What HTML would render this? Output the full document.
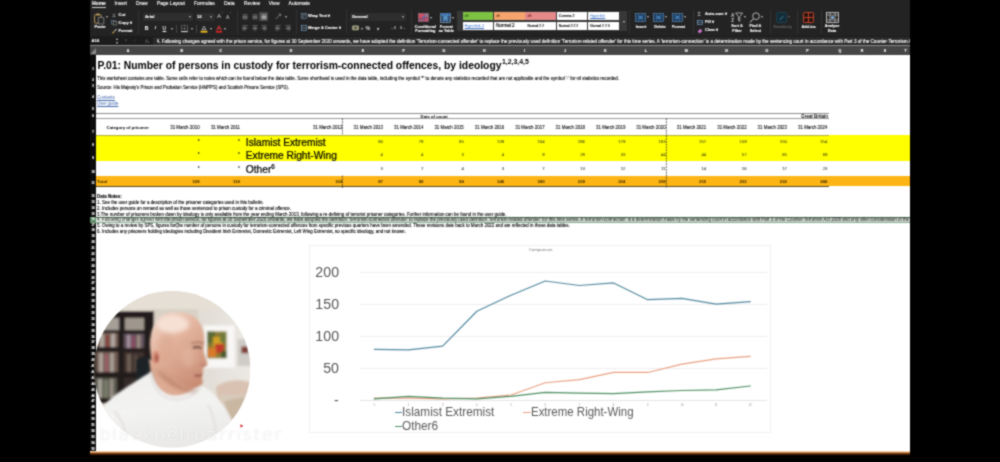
<!DOCTYPE html>
<html lang="en"><head><meta charset="utf-8"><title>P.01 Persons in custody for terrorism-connected offences</title>
<style>
html,body{margin:0;padding:0;background:#000;}
body{width:1000px;height:462px;position:relative;overflow:hidden;font-family:"Liberation Sans",sans-serif;}
.r{position:absolute;}
.t{position:absolute;white-space:nowrap;}
svg{position:absolute;overflow:visible;}
#stage{position:absolute;left:0;top:0;width:1000px;height:462px;overflow:hidden;background:#000;filter:url(#soft);will-change:transform;}
</style></head><body><svg width="0" height="0" style="position:absolute"><filter id="soft" x="0" y="0" width="100%" height="100%" color-interpolation-filters="sRGB"><feConvolveMatrix order="3" kernelMatrix="1 2 1 2 8 2 1 2 1" divisor="20" edgeMode="duplicate" preserveAlpha="true"/></filter></svg><div id="stage">
<div class="r" style="left:90px;top:0px;width:820px;height:36.5px;background:#232323;"></div>
<div class="r" style="left:90px;top:35.6px;width:820px;height:10px;background:#1c1c1c;"></div>
<div class="r" style="left:90px;top:45.3px;width:820px;height:1px;background:#8c8c8c;"></div>
<div class="r" style="left:90px;top:46.3px;width:820px;height:8.5px;background:#464646;"></div>
<span class="t " style="left:92px;top:0.4px;font-size:5px;line-height:6.0px;color:#fff;font-weight:bold;;-webkit-text-stroke:0.1px #fff">Home</span>
<span class="t " style="left:114.5px;top:0.4px;font-size:5px;line-height:6.0px;color:#fff;font-weight:normal;;-webkit-text-stroke:0.1px #fff">Insert</span>
<span class="t " style="left:136px;top:0.4px;font-size:5px;line-height:6.0px;color:#fff;font-weight:normal;;-webkit-text-stroke:0.1px #fff">Draw</span>
<span class="t " style="left:156.8px;top:0.4px;font-size:5px;line-height:6.0px;color:#fff;font-weight:normal;;-webkit-text-stroke:0.1px #fff">Page Layout</span>
<span class="t " style="left:194px;top:0.4px;font-size:5px;line-height:6.0px;color:#fff;font-weight:normal;;-webkit-text-stroke:0.1px #fff">Formulas</span>
<span class="t " style="left:224px;top:0.4px;font-size:5px;line-height:6.0px;color:#fff;font-weight:normal;;-webkit-text-stroke:0.1px #fff">Data</span>
<span class="t " style="left:243.8px;top:0.4px;font-size:5px;line-height:6.0px;color:#fff;font-weight:normal;;-webkit-text-stroke:0.1px #fff">Review</span>
<span class="t " style="left:268.8px;top:0.4px;font-size:5px;line-height:6.0px;color:#fff;font-weight:normal;;-webkit-text-stroke:0.1px #fff">View</span>
<span class="t " style="left:288.6px;top:0.4px;font-size:5px;line-height:6.0px;color:#fff;font-weight:normal;;-webkit-text-stroke:0.1px #fff">Automate</span>
<div class="r" style="left:92px;top:6.6px;width:13.6px;height:0.8px;background:#d0d0d0;"></div>
<svg style="left:94px;top:12.5px" width="11" height="12" viewBox="0 0 11 12"><rect x="0.6" y="1.6" width="6.4" height="8.6" rx="0.8" fill="none" stroke="#bd9c5c" stroke-width="0.95"/><rect x="2.2" y="0.4" width="3.2" height="2" rx="0.5" fill="#bd9c5c"/><rect x="4.4" y="4.4" width="5.4" height="6.6" rx="0.5" fill="#232323" stroke="#8f8f8f" stroke-width="0.8"/></svg>
<span class="t " style="left:106px;top:14.9px;font-size:3.5px;line-height:4.2px;color:#bbb;font-weight:normal;">▾</span>
<span class="t " style="left:94.6px;top:25.04px;font-size:4.1px;line-height:4.92px;color:#fff;font-weight:bold;;-webkit-text-stroke:0.1px #fff">Paste</span>
<svg style="left:112px;top:12.6px" width="4" height="4.6" viewBox="0 0 6 6"><path d="M1.2 0.3 L4 4.6 M4.8 0.3 L2 4.6" stroke="#a8a8a8" stroke-width="0.7" fill="none"/><circle cx="1.6" cy="5" r="0.8" fill="none" stroke="#a8a8a8" stroke-width="0.6"/><circle cx="4.4" cy="5" r="0.8" fill="none" stroke="#a8a8a8" stroke-width="0.6"/></svg>
<span class="t " style="left:118.6px;top:12.54px;font-size:4.1px;line-height:4.92px;color:#fff;font-weight:bold;;-webkit-text-stroke:0.1px #fff">Cut</span>
<svg style="left:111px;top:19.5px" width="7" height="6" viewBox="0 0 7 6"><rect x="0.4" y="0.4" width="3.6" height="3.6" fill="none" stroke="#6a8aa8" stroke-width="0.55"/><rect x="2.2" y="1.4" width="3.6" height="3.6" fill="#232323" stroke="#9a9a9a" stroke-width="0.55"/></svg>
<span class="t " style="left:118.6px;top:20.54px;font-size:4.1px;line-height:4.92px;color:#fff;font-weight:bold;;-webkit-text-stroke:0.1px #fff">Copy ▾</span>
<svg style="left:111px;top:27.5px" width="7" height="6" viewBox="0 0 7 6"><path d="M0.8 5 L2.8 3 L3.8 4 L1.8 5.4 Z" fill="#c9a04a"/><path d="M3.2 2.6 L5.2 0.8 L5.9 1.5 L4.1 3.5 Z" fill="#b0b0b0"/></svg>
<span class="t " style="left:118.6px;top:28.74px;font-size:4.1px;line-height:4.92px;color:#fff;font-weight:bold;;-webkit-text-stroke:0.1px #fff">Format</span>
<div class="r" style="left:137.5px;top:10px;width:0.5px;height:24px;background:#303030;"></div>
<div class="r" style="left:143px;top:12.6px;width:50px;height:8px;background:#2e2e2e;border-radius:1px"></div>
<span class="t " style="left:145px;top:14.08px;font-size:4.2px;line-height:5.04px;color:#fff;font-weight:bold;;-webkit-text-stroke:0.1px #fff">Arial</span>
<span class="t " style="left:188.5px;top:14.5px;font-size:3.5px;line-height:4.2px;color:#bbb;font-weight:normal;">▾</span>
<div class="r" style="left:195.5px;top:12.6px;width:19px;height:8px;background:#2e2e2e;border-radius:1px"></div>
<span class="t " style="left:197px;top:14.08px;font-size:4.2px;line-height:5.04px;color:#fff;font-weight:bold;;-webkit-text-stroke:0.1px #fff">12</span>
<span class="t " style="left:210px;top:14.5px;font-size:3.5px;line-height:4.2px;color:#bbb;font-weight:normal;">▾</span>
<span class="t " style="left:217px;top:12.48px;font-size:6.2px;line-height:7.44px;color:#d6d6d6;font-weight:normal;">A</span>
<span class="t " style="left:221.5px;top:11.6px;font-size:4px;line-height:4.8px;color:#d6d6d6;font-weight:normal;">ˆ</span>
<span class="t " style="left:226px;top:13.6px;font-size:5px;line-height:6.0px;color:#d6d6d6;font-weight:normal;">A</span>
<span class="t " style="left:230px;top:12.4px;font-size:3.5px;line-height:4.2px;color:#d6d6d6;font-weight:normal;">ˇ</span>
<span class="t " style="left:144.8px;top:25.4px;font-size:5px;line-height:6.0px;color:#fff;font-weight:bold;;-webkit-text-stroke:0.1px #fff">B</span>
<span class="t " style="left:154.6px;top:25.4px;font-size:5px;line-height:6.0px;color:#fff;font-weight:normal;font-style:italic;font-family:'Liberation Serif',serif;-webkit-text-stroke:0.1px #fff">I</span>
<span class="t " style="left:162.6px;top:25.4px;font-size:5px;line-height:6.0px;color:#fff;font-weight:normal;text-decoration:underline;-webkit-text-stroke:0.1px #fff">U</span>
<span class="t " style="left:170.5px;top:26.5px;font-size:3.5px;line-height:4.2px;color:#bbb;font-weight:normal;">▾</span>
<div class="r" style="left:176.2px;top:24.5px;width:0.5px;height:8px;background:#444;"></div>
<svg style="left:181px;top:25px" width="7" height="7" viewBox="0 0 7 7"><rect x="0.4" y="0.4" width="6.2" height="6.2" fill="none" stroke="#bdbdbd" stroke-width="0.5" stroke-dasharray="0.8 0.6"/><path d="M0.4 3.5 H6.6 M3.5 0.4 V6.6" stroke="#bdbdbd" stroke-width="0.5" stroke-dasharray="0.8 0.6"/><path d="M0.2 6.6 H6.8" stroke="#eee" stroke-width="0.9"/></svg>
<span class="t " style="left:190.5px;top:26.5px;font-size:3.5px;line-height:4.2px;color:#bbb;font-weight:normal;">▾</span>
<div class="r" style="left:196.2px;top:24.5px;width:0.5px;height:8px;background:#444;"></div>
<svg style="left:200px;top:24.5px" width="8" height="8" viewBox="0 0 8 8"><path d="M2 4.6 L4 1.2 L6 4.6 Z" fill="none" stroke="#d9d9d9" stroke-width="0.7"/><rect x="0.6" y="5.8" width="6.8" height="1.8" fill="#f4c41c"/></svg>
<span class="t " style="left:210px;top:26.5px;font-size:3.5px;line-height:4.2px;color:#bbb;font-weight:normal;">▾</span>
<svg style="left:214.5px;top:24.5px" width="8" height="8" viewBox="0 0 8 8"><path d="M1.6 5 L4 0.8 L6.4 5 M2.6 3.4 H5.4" fill="none" stroke="#e23b3b" stroke-width="0.9"/><rect x="0.8" y="5.8" width="6.4" height="1.8" fill="#e02424"/></svg>
<span class="t " style="left:224px;top:26.5px;font-size:3.5px;line-height:4.2px;color:#bbb;font-weight:normal;">▾</span>
<div class="r" style="left:236.5px;top:10px;width:0.5px;height:24px;background:#303030;"></div>
<div class="r" style="left:259.3px;top:12.4px;width:8.6px;height:8.4px;background:#4a4a4a;border-radius:1px"></div>
<svg style="left:242px;top:13.6px" width="6" height="6" viewBox="0 0 6 6"><rect x="0.5" y="0.6" width="5" height="0.6" fill="#a2a2a2"/><rect x="0.5" y="1.9500000000000002" width="5" height="0.6" fill="#a2a2a2"/><rect x="0.5" y="3.3000000000000003" width="5" height="0.6" fill="#a2a2a2"/><rect x="0.5" y="4.65" width="5" height="0.6" fill="#a2a2a2"/></svg>
<svg style="left:251.5px;top:13.6px" width="6" height="6" viewBox="0 0 6 6"><rect x="0.5" y="0.6" width="5" height="0.6" fill="#a2a2a2"/><rect x="0.5" y="1.9500000000000002" width="5" height="0.6" fill="#a2a2a2"/><rect x="0.5" y="3.3000000000000003" width="5" height="0.6" fill="#a2a2a2"/><rect x="0.5" y="4.65" width="5" height="0.6" fill="#a2a2a2"/></svg>
<svg style="left:260.6px;top:13.6px" width="6" height="6" viewBox="0 0 6 6"><rect x="0.5" y="0.6" width="5" height="0.6" fill="#eee"/><rect x="0.5" y="1.9500000000000002" width="5" height="0.6" fill="#eee"/><rect x="0.5" y="3.3000000000000003" width="5" height="0.6" fill="#eee"/><rect x="0.5" y="4.65" width="5" height="0.6" fill="#eee"/></svg>
<svg style="left:242px;top:25.4px" width="6" height="6" viewBox="0 0 6 6"><rect x="0.5" y="0.6" width="5" height="0.6" fill="#a2a2a2"/><rect x="0.5" y="1.9500000000000002" width="3.4" height="0.6" fill="#a2a2a2"/><rect x="0.5" y="3.3000000000000003" width="5" height="0.6" fill="#a2a2a2"/><rect x="0.5" y="4.65" width="3.4" height="0.6" fill="#a2a2a2"/></svg>
<svg style="left:251.5px;top:25.4px" width="6" height="6" viewBox="0 0 6 6"><rect x="0.5" y="0.6" width="5" height="0.6" fill="#a2a2a2"/><rect x="1.5" y="1.9500000000000002" width="3" height="0.6" fill="#a2a2a2"/><rect x="0.5" y="3.3000000000000003" width="5" height="0.6" fill="#a2a2a2"/><rect x="1.5" y="4.65" width="3" height="0.6" fill="#a2a2a2"/></svg>
<svg style="left:260.6px;top:25.4px" width="6" height="6" viewBox="0 0 6 6"><rect x="0.5" y="0.6" width="5" height="0.6" fill="#a2a2a2"/><rect x="2.1" y="1.9500000000000002" width="3.4" height="0.6" fill="#a2a2a2"/><rect x="0.5" y="3.3000000000000003" width="5" height="0.6" fill="#a2a2a2"/><rect x="2.1" y="4.65" width="3.4" height="0.6" fill="#a2a2a2"/></svg>
<svg style="left:275px;top:13px" width="8" height="7" viewBox="0 0 8 7"><path d="M0.8 6 L5.4 1.4 M3.6 1.2 H5.6 V3.2" fill="none" stroke="#a2a2a2" stroke-width="0.7"/></svg>
<span class="t " style="left:284.5px;top:14.7px;font-size:3.5px;line-height:4.2px;color:#bbb;font-weight:normal;">▾</span>
<svg style="left:275px;top:25.4px" width="6" height="6" viewBox="0 0 6 6"><rect x="0.5" y="0.6" width="5" height="0.6" fill="#a2a2a2"/><rect x="0.5" y="1.9500000000000002" width="3.4" height="0.6" fill="#a2a2a2"/><rect x="0.5" y="3.3000000000000003" width="5" height="0.6" fill="#a2a2a2"/><rect x="0.5" y="4.65" width="3.4" height="0.6" fill="#a2a2a2"/></svg>
<svg style="left:284.5px;top:25.4px" width="6" height="6" viewBox="0 0 6 6"><rect x="0.5" y="0.6" width="5" height="0.6" fill="#a2a2a2"/><rect x="2.1" y="1.9500000000000002" width="3.4" height="0.6" fill="#a2a2a2"/><rect x="0.5" y="3.3000000000000003" width="5" height="0.6" fill="#a2a2a2"/><rect x="2.1" y="4.65" width="3.4" height="0.6" fill="#a2a2a2"/></svg>
<div class="r" style="left:295.5px;top:10px;width:0.5px;height:24px;background:#303030;"></div>
<svg style="left:301px;top:13.4px" width="6" height="6" viewBox="0 0 6 6"><rect x="0.4" y="0.4" width="5.2" height="5.2" fill="none" stroke="#6a9ac6" stroke-width="0.6"/><path d="M1.4 2 H4.6 M1.4 3.8 H3.4" stroke="#cfcfcf" stroke-width="0.5"/></svg>
<span class="t " style="left:308px;top:14.0px;font-size:4.0px;line-height:4.8px;color:#fff;font-weight:bold;;-webkit-text-stroke:0.1px #fff">Wrap Text ▾</span>
<svg style="left:301px;top:25.4px" width="6" height="6" viewBox="0 0 6 6"><rect x="0.4" y="0.4" width="5.2" height="5.2" fill="none" stroke="#7fb2e0" stroke-width="0.6"/><path d="M1.2 3 H4.8" stroke="#cfcfcf" stroke-width="0.6"/></svg>
<span class="t " style="left:308px;top:26.0px;font-size:4.0px;line-height:4.8px;color:#fff;font-weight:bold;;-webkit-text-stroke:0.1px #fff">Merge &amp; Centre ▾</span>
<div class="r" style="left:345.5px;top:10px;width:0.5px;height:24px;background:#303030;"></div>
<div class="r" style="left:350px;top:12.6px;width:56px;height:8px;background:#2e2e2e;border-radius:1px"></div>
<span class="t " style="left:352px;top:14.08px;font-size:4.2px;line-height:5.04px;color:#fff;font-weight:bold;;-webkit-text-stroke:0.1px #fff">General</span>
<span class="t " style="left:401.5px;top:14.5px;font-size:3.5px;line-height:4.2px;color:#bbb;font-weight:normal;">▾</span>
<svg style="left:352px;top:25.4px" width="7" height="6" viewBox="0 0 7 6"><rect x="0.4" y="0.8" width="6.2" height="4.2" rx="0.6" fill="#9a9a7a" stroke="#c9c9a9" stroke-width="0.4"/><circle cx="3.5" cy="2.9" r="1.1" fill="#3a3a2a"/></svg>
<span class="t " style="left:360.5px;top:26.5px;font-size:3.5px;line-height:4.2px;color:#bbb;font-weight:normal;">▾</span>
<span class="t " style="left:365.5px;top:25.16px;font-size:5.4px;line-height:6.48px;color:#d6d6d6;font-weight:bold;">%</span>
<span class="t " style="left:376.5px;top:24.24px;font-size:5.6px;line-height:6.72px;color:#d6d6d6;font-weight:bold;">❟</span>
<span class="t " style="left:390.5px;top:26.36px;font-size:3.4px;line-height:4.08px;color:#c9c9c9;font-weight:bold;">←0</span>
<span class="t " style="left:400px;top:26.36px;font-size:3.4px;line-height:4.08px;color:#c9c9c9;font-weight:bold;">0→</span>
<div class="r" style="left:410.5px;top:10px;width:0.5px;height:24px;background:#303030;"></div>
<svg style="left:417.8px;top:12.8px" width="11" height="9" viewBox="0 0 11 9"><rect x="0.4" y="0.4" width="10.2" height="8.2" fill="#7a3850" stroke="#b08a9a" stroke-width="0.5"/><rect x="0.8" y="0.8" width="5.4" height="4.4" fill="#cf4f66"/><rect x="6.4" y="4.6" width="3.8" height="3.6" fill="#b8506a"/><rect x="6.4" y="0.8" width="3.8" height="3.4" fill="#8f7a90"/><rect x="0.8" y="5.6" width="5.2" height="2.6" fill="#9a5a74"/><circle cx="5.6" cy="4.4" r="1.1" fill="#3f6fc0"/></svg>
<span class="t " style="left:430px;top:15.5px;font-size:3.5px;line-height:4.2px;color:#bbb;font-weight:normal;">▾</span>
<span class="t" style="left:375.4px;width:100px;text-align:center;top:24.79px;font-size:3.85px;line-height:4.62px;color:#fff;font-weight:bold;;-webkit-text-stroke:0.1px #fff">Conditional</span>
<span class="t" style="left:375.4px;width:100px;text-align:center;top:28.99px;font-size:3.85px;line-height:4.62px;color:#fff;font-weight:bold;;-webkit-text-stroke:0.1px #fff">Formatting</span>
<svg style="left:439.6px;top:12.6px" width="11" height="10" viewBox="0 0 11 10"><rect x="0.4" y="0.4" width="10.2" height="9.2" fill="#1c3a5c" stroke="#9ab4cc" stroke-width="0.6"/><rect x="3.8" y="2.8" width="3.4" height="4.4" fill="#3f86c8"/><rect x="0.4" y="0.4" width="10.2" height="2.4" fill="#2f6aa8"/><path d="M0.4 2.8 H10.6 M0.4 5 H10.6 M0.4 7.2 H10.6 M3.8 0.4 V9.6 M7.2 0.4 V9.6" stroke="#8fb0d0" stroke-width="0.45"/></svg>
<span class="t " style="left:452px;top:15.5px;font-size:3.5px;line-height:4.2px;color:#bbb;font-weight:normal;">▾</span>
<span class="t" style="left:396.3px;width:100px;text-align:center;top:24.79px;font-size:3.85px;line-height:4.62px;color:#fff;font-weight:bold;;-webkit-text-stroke:0.1px #fff">Format</span>
<span class="t" style="left:396.3px;width:100px;text-align:center;top:28.99px;font-size:3.85px;line-height:4.62px;color:#fff;font-weight:bold;;-webkit-text-stroke:0.1px #fff">as Table</span>
<div class="r" style="left:457px;top:11.2px;width:169.6px;height:20.2px;background:#383838;border-radius:1px"></div>
<div class="r" style="left:462.6px;top:12.4px;width:30.6px;height:7.8px;background:#7dc242;"></div>
<span class="t " style="left:464.6px;top:14.24px;font-size:3.6px;line-height:4.32px;color:#1f3d0c;font-weight:normal;">dft</span>
<div class="r" style="left:494px;top:12.4px;width:30.6px;height:7.8px;background:#f4a46c;"></div>
<span class="t " style="left:496px;top:14.24px;font-size:3.6px;line-height:4.32px;color:#5a2a08;font-weight:normal;">dft</span>
<div class="r" style="left:525.4px;top:12.4px;width:30.6px;height:7.8px;background:#e48a8a;"></div>
<span class="t " style="left:527.4px;top:14.24px;font-size:3.6px;line-height:4.32px;color:#5a0808;font-weight:normal;">dft</span>
<div class="r" style="left:556.8px;top:12.4px;width:30.6px;height:7.8px;background:#fff;"></div>
<span class="t " style="left:558.8px;top:14.24px;font-size:3.6px;line-height:4.32px;color:#000;font-weight:normal;;-webkit-text-stroke:0.12px #000">Comma 2</span>
<div class="r" style="left:588.2px;top:12.4px;width:30.6px;height:7.8px;background:#fff;"></div>
<span class="t " style="left:590.2px;top:14.24px;font-size:3.6px;line-height:4.32px;color:#3a6fc4;font-weight:normal;text-decoration:underline;text-decoration-thickness:0.35px">Hyperlink</span>
<div class="r" style="left:462.6px;top:22.4px;width:30.6px;height:7.4px;background:#fff;"></div>
<span class="t " style="left:464.6px;top:23.86px;font-size:3.9px;line-height:4.68px;color:#3a6fc4;font-weight:normal;text-decoration:underline;text-decoration-thickness:0.35px">Hyperlink 2</span>
<div class="r" style="left:494px;top:22.4px;width:30.6px;height:7.4px;background:#fff;"></div>
<span class="t " style="left:496px;top:23.44px;font-size:4.6px;line-height:5.52px;color:#000;font-weight:normal;;-webkit-text-stroke:0.12px #000">Normal 2</span>
<div class="r" style="left:525.4px;top:22.4px;width:30.6px;height:7.4px;background:#fff;"></div>
<span class="t " style="left:527.4px;top:24.16px;font-size:3.4px;line-height:4.08px;color:#000;font-weight:normal;;-webkit-text-stroke:0.12px #000">Normal 2 2</span>
<div class="r" style="left:556.8px;top:22.4px;width:30.6px;height:7.4px;background:#fff;"></div>
<span class="t " style="left:558.8px;top:24.16px;font-size:3.4px;line-height:4.08px;color:#000;font-weight:normal;;-webkit-text-stroke:0.12px #000">Normal 2 2 2</span>
<div class="r" style="left:588.2px;top:22.4px;width:30.6px;height:7.4px;background:#fff;"></div>
<span class="t " style="left:590.2px;top:24.16px;font-size:3.4px;line-height:4.08px;color:#000;font-weight:normal;;-webkit-text-stroke:0.12px #000">Normal 2 2 3</span>
<span class="t " style="left:622.6px;top:19.5px;font-size:3.5px;line-height:4.2px;color:#bbb;font-weight:normal;">▾</span>
<div class="r" style="left:628.5px;top:10px;width:0.5px;height:24px;background:#303030;"></div>
<svg style="left:635px;top:12.6px" width="11" height="9" viewBox="0 0 11 9"><rect x="0.4" y="0.4" width="10.2" height="8.2" fill="#1a3048" stroke="#5f98cf" stroke-width="0.6"/><path d="M0.4 3 H10.6 M0.4 5.8 H10.6 M3.8 0.4 V8.6 M7.2 0.4 V8.6" stroke="#4f86bd" stroke-width="0.5"/><rect x="3.8" y="3" width="3.4" height="2.8" fill="#3f78b4"/></svg>
<span class="t " style="left:647px;top:14.9px;font-size:3.5px;line-height:4.2px;color:#bbb;font-weight:normal;">▾</span>
<svg style="left:653.4px;top:12.6px" width="11" height="9" viewBox="0 0 11 9"><rect x="0.4" y="0.4" width="10.2" height="8.2" fill="#1a3048" stroke="#5f98cf" stroke-width="0.6"/><path d="M0.4 3 H10.6 M0.4 5.8 H10.6 M3.8 0.4 V8.6 M7.2 0.4 V8.6" stroke="#4f86bd" stroke-width="0.5"/><rect x="3.8" y="3" width="3.4" height="2.8" fill="#3f78b4"/></svg>
<span class="t " style="left:665.4px;top:14.9px;font-size:3.5px;line-height:4.2px;color:#bbb;font-weight:normal;">▾</span>
<svg style="left:671.6px;top:12.6px" width="11" height="9" viewBox="0 0 11 9"><rect x="0.4" y="0.4" width="10.2" height="8.2" fill="#1a3048" stroke="#5f98cf" stroke-width="0.6"/><path d="M0.4 3 H10.6 M0.4 5.8 H10.6 M3.8 0.4 V8.6 M7.2 0.4 V8.6" stroke="#4f86bd" stroke-width="0.5"/><rect x="3.8" y="3" width="3.4" height="2.8" fill="#3f78b4"/></svg>
<span class="t " style="left:683.6px;top:14.9px;font-size:3.5px;line-height:4.2px;color:#bbb;font-weight:normal;">▾</span>
<span class="t" style="left:591px;width:100px;text-align:center;top:24.69px;font-size:3.85px;line-height:4.62px;color:#fff;font-weight:bold;;-webkit-text-stroke:0.1px #fff">Insert</span>
<span class="t" style="left:610px;width:100px;text-align:center;top:24.69px;font-size:3.85px;line-height:4.62px;color:#fff;font-weight:bold;;-webkit-text-stroke:0.1px #fff">Delete</span>
<span class="t" style="left:628.5px;width:100px;text-align:center;top:24.69px;font-size:3.85px;line-height:4.62px;color:#fff;font-weight:bold;;-webkit-text-stroke:0.1px #fff">Format</span>
<div class="r" style="left:692.5px;top:10px;width:0.5px;height:24px;background:#303030;"></div>
<span class="t " style="left:697.5px;top:11.04px;font-size:5.6px;line-height:6.72px;color:#d6d6d6;font-weight:normal;">Σ</span>
<span class="t " style="left:705px;top:12.0px;font-size:4.0px;line-height:4.8px;color:#fff;font-weight:bold;;-webkit-text-stroke:0.1px #fff">Auto-sum ▾</span>
<svg style="left:697px;top:19.8px" width="6" height="5" viewBox="0 0 6 5"><rect x="0.4" y="0.4" width="5.2" height="4.2" fill="none" stroke="#7fb2e0" stroke-width="0.6"/><path d="M0.4 2.5 H5.6" stroke="#7fb2e0" stroke-width="0.5"/></svg>
<span class="t " style="left:705px;top:20.0px;font-size:4.0px;line-height:4.8px;color:#fff;font-weight:bold;;-webkit-text-stroke:0.1px #fff">Fill ▾</span>
<svg style="left:697px;top:27.6px" width="6" height="6" viewBox="0 0 6 6"><path d="M0.6 3.8 L3.2 0.8 L5.4 2.8 L2.8 5.6 Z" fill="#c774c7"/></svg>
<span class="t " style="left:705px;top:28.0px;font-size:4.0px;line-height:4.8px;color:#fff;font-weight:bold;;-webkit-text-stroke:0.1px #fff">Clear ▾</span>
<svg style="left:730.5px;top:12.4px" width="13" height="11" viewBox="0 0 13 11"><text x="0" y="4.6" font-size="4.6" font-family="Liberation Sans" font-weight="bold" fill="#d6d6d6">A</text><text x="0.2" y="9.8" font-size="4.6" font-family="Liberation Sans" font-weight="bold" fill="#d6d6d6">Z</text><path d="M4.6 1 H11.6 L8.8 4.6 V9.4 L7.4 8.4 V4.6 Z" fill="none" stroke="#d6d6d6" stroke-width="0.7"/></svg>
<span class="t " style="left:743.6px;top:15.3px;font-size:3.5px;line-height:4.2px;color:#bbb;font-weight:normal;">▾</span>
<span class="t" style="left:687px;width:100px;text-align:center;top:24.29px;font-size:3.85px;line-height:4.62px;color:#fff;font-weight:bold;;-webkit-text-stroke:0.1px #fff">Sort &amp;</span>
<span class="t" style="left:687px;width:100px;text-align:center;top:28.69px;font-size:3.85px;line-height:4.62px;color:#fff;font-weight:bold;;-webkit-text-stroke:0.1px #fff">Filter</span>
<svg style="left:748.5px;top:12.4px" width="12" height="11" viewBox="0 0 12 11"><circle cx="7" cy="4.2" r="3.4" fill="none" stroke="#d6d6d6" stroke-width="0.8"/><path d="M4.6 6.8 L0.8 10.4" stroke="#d6d6d6" stroke-width="1"/></svg>
<span class="t " style="left:761.2px;top:15.3px;font-size:3.5px;line-height:4.2px;color:#bbb;font-weight:normal;">▾</span>
<span class="t" style="left:705.4px;width:100px;text-align:center;top:24.29px;font-size:3.85px;line-height:4.62px;color:#fff;font-weight:bold;;-webkit-text-stroke:0.1px #fff">Find &amp;</span>
<span class="t" style="left:705.4px;width:100px;text-align:center;top:28.69px;font-size:3.85px;line-height:4.62px;color:#fff;font-weight:bold;;-webkit-text-stroke:0.1px #fff">Select</span>
<div class="r" style="left:769.5px;top:10px;width:0.5px;height:24px;background:#303030;"></div>
<svg style="left:776px;top:12.4px" width="11" height="11" viewBox="0 0 11 11"><rect x="0.6" y="0.6" width="9.8" height="9.8" rx="1" fill="#142a34" stroke="#20495c" stroke-width="0.8"/><path d="M3 7.6 L6.8 3.2 L8 4.4 L4.4 8.4 Z" fill="#24566c"/></svg>
<span class="t " style="left:788.4px;top:15.3px;font-size:3.5px;line-height:4.2px;color:#666;font-weight:normal;">▾</span>
<span class="t" style="left:732.5px;width:100px;text-align:center;top:24.78px;font-size:3.7px;line-height:4.44px;color:#6a6a6a;font-weight:bold;">Sensitivity</span>
<div class="r" style="left:796.5px;top:10px;width:0.5px;height:24px;background:#303030;"></div>
<svg style="left:803px;top:12.4px" width="11" height="11" viewBox="0 0 11 11"><rect x="0.5" y="0.5" width="10" height="10" rx="0.8" fill="#2a1410" stroke="#bf432b" stroke-width="1"/><path d="M0.5 5.5 H10.5 M5.5 0.5 V10.5" stroke="#bf432b" stroke-width="1"/></svg>
<span class="t" style="left:758.6px;width:100px;text-align:center;top:24.69px;font-size:3.85px;line-height:4.62px;color:#fff;font-weight:bold;;-webkit-text-stroke:0.1px #fff">Add-ins</span>
<div class="r" style="left:820.5px;top:10px;width:0.5px;height:24px;background:#303030;"></div>
<svg style="left:825.6px;top:12.2px" width="13" height="11" viewBox="0 0 13 11"><rect x="0.5" y="0.5" width="12" height="10" fill="#2a2a2a" stroke="#d6d6d6" stroke-width="0.8"/><path d="M0.5 3 H12.5 M0.5 8 H12.5 M4 0.5 V10.5 M9 0.5 V10.5" stroke="#d6d6d6" stroke-width="0.6"/><circle cx="6.5" cy="5.5" r="1.6" fill="#7fb2e0"/></svg>
<span class="t" style="left:782px;width:100px;text-align:center;top:24.49px;font-size:3.85px;line-height:4.62px;color:#fff;font-weight:bold;;-webkit-text-stroke:0.1px #fff">Analyse</span>
<span class="t" style="left:782px;width:100px;text-align:center;top:28.69px;font-size:3.85px;line-height:4.62px;color:#fff;font-weight:bold;;-webkit-text-stroke:0.1px #fff">Data</span>
<span class="t " style="left:91.6px;top:38.48px;font-size:4.2px;line-height:5.04px;color:#fff;font-weight:bold;;-webkit-text-stroke:0.1px #fff">A16</span>
<span class="t " style="left:116.4px;top:37.24px;font-size:3.6px;line-height:4.32px;color:#ccc;font-weight:normal;">▴</span>
<span class="t " style="left:116.4px;top:40.64px;font-size:3.6px;line-height:4.32px;color:#ccc;font-weight:normal;">▾</span>
<span class="t " style="left:124.4px;top:38.24px;font-size:4.6px;line-height:5.52px;color:#5a5a5a;font-weight:normal;">×</span>
<span class="t " style="left:133px;top:38.48px;font-size:4.2px;line-height:5.04px;color:#5a5a5a;font-weight:normal;">✓</span>
<span class="t " style="left:145.6px;top:38.0px;font-size:5px;line-height:6.0px;color:#a8a8a8;font-weight:normal;font-style:italic;font-family:'Liberation Serif',serif">f</span>
<span class="t " style="left:147.6px;top:39.76px;font-size:3.4px;line-height:4.08px;color:#a8a8a8;font-weight:normal;font-style:italic;font-family:'Liberation Serif',serif">x</span>
<div class="r" style="left:152.5px;top:36.6px;width:757.5px;height:8.4px;background:#2a2a2a;"></div>
<div class="r" style="left:156.6px;top:37.2px;width:753.4px;height:7.8px;overflow:hidden"><span class="t" style="left:0;top:2.1px;font-size:4.6px;line-height:5.4px;color:#f2f2f2;font-weight:normal;-webkit-text-stroke:0.15px #f2f2f2">4. Following changes agreed with the prison service, for figures at 30 September 2020 onwards, we have adopted the definition 'Terrorism-connected offender' to replace the previously used definition 'Terrorism-related offender' for this time series. A 'terrorism-connection' is a determination made by the sentencing court in accordance with Part 3 of the Counter-Terrorism Act 2008 and only after consideration of the evidence</span></div>
<span class="t" style="left:78px;width:100px;text-align:center;top:48.54px;font-size:3.6px;line-height:4.32px;color:#fff;font-weight:bold;;-webkit-text-stroke:0.1px #fff">A</span>
<span class="t" style="left:131.8px;width:100px;text-align:center;top:48.54px;font-size:3.6px;line-height:4.32px;color:#fff;font-weight:bold;;-webkit-text-stroke:0.1px #fff">B</span>
<span class="t" style="left:170.8px;width:100px;text-align:center;top:48.54px;font-size:3.6px;line-height:4.32px;color:#fff;font-weight:bold;;-webkit-text-stroke:0.1px #fff">C</span>
<span class="t" style="left:241px;width:100px;text-align:center;top:48.54px;font-size:3.6px;line-height:4.32px;color:#fff;font-weight:bold;;-webkit-text-stroke:0.1px #fff">D</span>
<span class="t" style="left:313px;width:100px;text-align:center;top:48.54px;font-size:3.6px;line-height:4.32px;color:#fff;font-weight:bold;;-webkit-text-stroke:0.1px #fff">E</span>
<span class="t" style="left:353.5px;width:100px;text-align:center;top:48.54px;font-size:3.6px;line-height:4.32px;color:#fff;font-weight:bold;;-webkit-text-stroke:0.1px #fff">F</span>
<span class="t" style="left:393.8px;width:100px;text-align:center;top:48.54px;font-size:3.6px;line-height:4.32px;color:#fff;font-weight:bold;;-webkit-text-stroke:0.1px #fff">G</span>
<span class="t" style="left:434.2px;width:100px;text-align:center;top:48.54px;font-size:3.6px;line-height:4.32px;color:#fff;font-weight:bold;;-webkit-text-stroke:0.1px #fff">H</span>
<span class="t" style="left:474.6px;width:100px;text-align:center;top:48.54px;font-size:3.6px;line-height:4.32px;color:#fff;font-weight:bold;;-webkit-text-stroke:0.1px #fff">I</span>
<span class="t" style="left:515px;width:100px;text-align:center;top:48.54px;font-size:3.6px;line-height:4.32px;color:#fff;font-weight:bold;;-webkit-text-stroke:0.1px #fff">J</span>
<span class="t" style="left:555.4px;width:100px;text-align:center;top:48.54px;font-size:3.6px;line-height:4.32px;color:#fff;font-weight:bold;;-webkit-text-stroke:0.1px #fff">K</span>
<span class="t" style="left:595.8px;width:100px;text-align:center;top:48.54px;font-size:3.6px;line-height:4.32px;color:#fff;font-weight:bold;;-webkit-text-stroke:0.1px #fff">L</span>
<span class="t" style="left:636.2px;width:100px;text-align:center;top:48.54px;font-size:3.6px;line-height:4.32px;color:#fff;font-weight:bold;;-webkit-text-stroke:0.1px #fff">M</span>
<span class="t" style="left:676.6px;width:100px;text-align:center;top:48.54px;font-size:3.6px;line-height:4.32px;color:#fff;font-weight:bold;;-webkit-text-stroke:0.1px #fff">N</span>
<span class="t" style="left:717px;width:100px;text-align:center;top:48.54px;font-size:3.6px;line-height:4.32px;color:#fff;font-weight:bold;;-webkit-text-stroke:0.1px #fff">O</span>
<span class="t" style="left:757.4px;width:100px;text-align:center;top:48.54px;font-size:3.6px;line-height:4.32px;color:#fff;font-weight:bold;;-webkit-text-stroke:0.1px #fff">P</span>
<span class="t" style="left:790px;width:100px;text-align:center;top:48.54px;font-size:3.6px;line-height:4.32px;color:#fff;font-weight:bold;;-webkit-text-stroke:0.1px #fff">Q</span>
<span class="t" style="left:812px;width:100px;text-align:center;top:48.54px;font-size:3.6px;line-height:4.32px;color:#fff;font-weight:bold;;-webkit-text-stroke:0.1px #fff">R</span>
<span class="t" style="left:835px;width:100px;text-align:center;top:48.54px;font-size:3.6px;line-height:4.32px;color:#fff;font-weight:bold;;-webkit-text-stroke:0.1px #fff">S</span>
<span class="t" style="left:855.6px;width:100px;text-align:center;top:48.54px;font-size:3.6px;line-height:4.32px;color:#fff;font-weight:bold;;-webkit-text-stroke:0.1px #fff">T</span>
<svg style="left:90px;top:47px" width="7" height="8" viewBox="0 0 7 8"><path d="M6 1 V7 H0.6 Z" fill="#8a8a8a"/></svg>
<div class="r" style="left:90px;top:55px;width:820px;height:396.6px;background:#fff;"></div>
<div class="r" style="left:90px;top:55px;width:5.8px;height:396.6px;background:#0c0c0c;"></div>
<div class="r" style="left:90px;top:451.3px;width:820px;height:5.2px;background:linear-gradient(to bottom,#fff 0%,#f3cfa8 12%,#c27a3e 32%,#7a3c14 52%,#241005 76%,#000 100%);"></div>
<span class="t" style="left:43.099999999999994px;width:100px;text-align:center;top:68.4px;font-size:3px;line-height:3.6px;color:#fff;font-weight:bold;;-webkit-text-stroke:0.1px #fff">1</span>
<span class="t" style="left:43.099999999999994px;width:100px;text-align:center;top:78.8px;font-size:3px;line-height:3.6px;color:#fff;font-weight:bold;;-webkit-text-stroke:0.1px #fff">2</span>
<span class="t" style="left:43.099999999999994px;width:100px;text-align:center;top:84.8px;font-size:3px;line-height:3.6px;color:#fff;font-weight:bold;;-webkit-text-stroke:0.1px #fff">3</span>
<span class="t" style="left:43.099999999999994px;width:100px;text-align:center;top:96.2px;font-size:3px;line-height:3.6px;color:#fff;font-weight:bold;;-webkit-text-stroke:0.1px #fff">4</span>
<span class="t" style="left:43.099999999999994px;width:100px;text-align:center;top:107.6px;font-size:3px;line-height:3.6px;color:#fff;font-weight:bold;;-webkit-text-stroke:0.1px #fff">5</span>
<span class="t" style="left:43.099999999999994px;width:100px;text-align:center;top:114.6px;font-size:3px;line-height:3.6px;color:#fff;font-weight:bold;;-webkit-text-stroke:0.1px #fff">6</span>
<span class="t" style="left:43.099999999999994px;width:100px;text-align:center;top:130.8px;font-size:3px;line-height:3.6px;color:#fff;font-weight:bold;;-webkit-text-stroke:0.1px #fff">7</span>
<span class="t" style="left:43.099999999999994px;width:100px;text-align:center;top:143.6px;font-size:3px;line-height:3.6px;color:#fff;font-weight:bold;;-webkit-text-stroke:0.1px #fff">8</span>
<span class="t" style="left:43.099999999999994px;width:100px;text-align:center;top:156.6px;font-size:3px;line-height:3.6px;color:#fff;font-weight:bold;;-webkit-text-stroke:0.1px #fff">9</span>
<span class="t" style="left:43.099999999999994px;width:100px;text-align:center;top:171.2px;font-size:3px;line-height:3.6px;color:#fff;font-weight:bold;;-webkit-text-stroke:0.1px #fff">10</span>
<span class="t" style="left:43.099999999999994px;width:100px;text-align:center;top:182.0px;font-size:3px;line-height:3.6px;color:#fff;font-weight:bold;;-webkit-text-stroke:0.1px #fff">11</span>
<span class="t" style="left:43.099999999999994px;width:100px;text-align:center;top:194.5px;font-size:3px;line-height:3.6px;color:#fff;font-weight:bold;;-webkit-text-stroke:0.1px #fff">12</span>
<span class="t" style="left:43.099999999999994px;width:100px;text-align:center;top:200.5px;font-size:3px;line-height:3.6px;color:#fff;font-weight:bold;;-webkit-text-stroke:0.1px #fff">13</span>
<span class="t" style="left:43.099999999999994px;width:100px;text-align:center;top:206.5px;font-size:3px;line-height:3.6px;color:#fff;font-weight:bold;;-webkit-text-stroke:0.1px #fff">14</span>
<span class="t" style="left:43.099999999999994px;width:100px;text-align:center;top:212.5px;font-size:3px;line-height:3.6px;color:#fff;font-weight:bold;;-webkit-text-stroke:0.1px #fff">15</span>
<div class="r" style="left:90px;top:217.2px;width:6.2px;height:5.6px;background:#5f8f6a;"></div>
<span class="t" style="left:43.099999999999994px;width:100px;text-align:center;top:218.1px;font-size:3px;line-height:3.6px;color:#fff;font-weight:bold;">16</span>
<span class="t" style="left:43.099999999999994px;width:100px;text-align:center;top:223.8px;font-size:3px;line-height:3.6px;color:#fff;font-weight:bold;;-webkit-text-stroke:0.1px #fff">17</span>
<span class="t" style="left:43.099999999999994px;width:100px;text-align:center;top:229.4px;font-size:3px;line-height:3.6px;color:#fff;font-weight:bold;;-webkit-text-stroke:0.1px #fff">18</span>
<span class="t" style="left:43.099999999999994px;width:100px;text-align:center;top:235.2px;font-size:3px;line-height:3.6px;color:#fff;font-weight:bold;;-webkit-text-stroke:0.1px #fff">19</span>
<span class="t" style="left:43.099999999999994px;width:100px;text-align:center;top:241.1px;font-size:3px;line-height:3.6px;color:#fff;font-weight:bold;;-webkit-text-stroke:0.1px #fff">20</span>
<span class="t" style="left:43.099999999999994px;width:100px;text-align:center;top:247.0px;font-size:3px;line-height:3.6px;color:#fff;font-weight:bold;;-webkit-text-stroke:0.1px #fff">21</span>
<span class="t" style="left:43.099999999999994px;width:100px;text-align:center;top:252.9px;font-size:3px;line-height:3.6px;color:#fff;font-weight:bold;;-webkit-text-stroke:0.1px #fff">22</span>
<span class="t" style="left:43.099999999999994px;width:100px;text-align:center;top:258.8px;font-size:3px;line-height:3.6px;color:#fff;font-weight:bold;;-webkit-text-stroke:0.1px #fff">23</span>
<span class="t" style="left:43.099999999999994px;width:100px;text-align:center;top:264.7px;font-size:3px;line-height:3.6px;color:#fff;font-weight:bold;;-webkit-text-stroke:0.1px #fff">24</span>
<span class="t" style="left:43.099999999999994px;width:100px;text-align:center;top:270.6px;font-size:3px;line-height:3.6px;color:#fff;font-weight:bold;;-webkit-text-stroke:0.1px #fff">25</span>
<span class="t" style="left:43.099999999999994px;width:100px;text-align:center;top:276.5px;font-size:3px;line-height:3.6px;color:#fff;font-weight:bold;;-webkit-text-stroke:0.1px #fff">26</span>
<span class="t" style="left:43.099999999999994px;width:100px;text-align:center;top:282.4px;font-size:3px;line-height:3.6px;color:#fff;font-weight:bold;;-webkit-text-stroke:0.1px #fff">27</span>
<span class="t" style="left:43.099999999999994px;width:100px;text-align:center;top:288.3px;font-size:3px;line-height:3.6px;color:#fff;font-weight:bold;;-webkit-text-stroke:0.1px #fff">28</span>
<span class="t" style="left:43.099999999999994px;width:100px;text-align:center;top:294.2px;font-size:3px;line-height:3.6px;color:#fff;font-weight:bold;;-webkit-text-stroke:0.1px #fff">29</span>
<span class="t" style="left:43.099999999999994px;width:100px;text-align:center;top:300.1px;font-size:3px;line-height:3.6px;color:#fff;font-weight:bold;;-webkit-text-stroke:0.1px #fff">30</span>
<span class="t" style="left:43.099999999999994px;width:100px;text-align:center;top:306.0px;font-size:3px;line-height:3.6px;color:#fff;font-weight:bold;;-webkit-text-stroke:0.1px #fff">31</span>
<span class="t" style="left:43.099999999999994px;width:100px;text-align:center;top:311.9px;font-size:3px;line-height:3.6px;color:#fff;font-weight:bold;;-webkit-text-stroke:0.1px #fff">32</span>
<span class="t" style="left:43.099999999999994px;width:100px;text-align:center;top:317.8px;font-size:3px;line-height:3.6px;color:#fff;font-weight:bold;;-webkit-text-stroke:0.1px #fff">33</span>
<span class="t" style="left:43.099999999999994px;width:100px;text-align:center;top:323.7px;font-size:3px;line-height:3.6px;color:#fff;font-weight:bold;;-webkit-text-stroke:0.1px #fff">34</span>
<span class="t" style="left:43.099999999999994px;width:100px;text-align:center;top:329.6px;font-size:3px;line-height:3.6px;color:#fff;font-weight:bold;;-webkit-text-stroke:0.1px #fff">35</span>
<span class="t" style="left:43.099999999999994px;width:100px;text-align:center;top:335.5px;font-size:3px;line-height:3.6px;color:#fff;font-weight:bold;;-webkit-text-stroke:0.1px #fff">36</span>
<span class="t" style="left:43.099999999999994px;width:100px;text-align:center;top:341.4px;font-size:3px;line-height:3.6px;color:#fff;font-weight:bold;;-webkit-text-stroke:0.1px #fff">37</span>
<span class="t" style="left:43.099999999999994px;width:100px;text-align:center;top:347.3px;font-size:3px;line-height:3.6px;color:#fff;font-weight:bold;;-webkit-text-stroke:0.1px #fff">38</span>
<span class="t" style="left:43.099999999999994px;width:100px;text-align:center;top:353.2px;font-size:3px;line-height:3.6px;color:#fff;font-weight:bold;;-webkit-text-stroke:0.1px #fff">39</span>
<span class="t" style="left:43.099999999999994px;width:100px;text-align:center;top:359.1px;font-size:3px;line-height:3.6px;color:#fff;font-weight:bold;;-webkit-text-stroke:0.1px #fff">40</span>
<span class="t" style="left:43.099999999999994px;width:100px;text-align:center;top:365.0px;font-size:3px;line-height:3.6px;color:#fff;font-weight:bold;;-webkit-text-stroke:0.1px #fff">41</span>
<span class="t" style="left:43.099999999999994px;width:100px;text-align:center;top:370.9px;font-size:3px;line-height:3.6px;color:#fff;font-weight:bold;;-webkit-text-stroke:0.1px #fff">42</span>
<span class="t" style="left:43.099999999999994px;width:100px;text-align:center;top:376.8px;font-size:3px;line-height:3.6px;color:#fff;font-weight:bold;;-webkit-text-stroke:0.1px #fff">43</span>
<span class="t" style="left:43.099999999999994px;width:100px;text-align:center;top:382.7px;font-size:3px;line-height:3.6px;color:#fff;font-weight:bold;;-webkit-text-stroke:0.1px #fff">44</span>
<span class="t" style="left:43.099999999999994px;width:100px;text-align:center;top:388.6px;font-size:3px;line-height:3.6px;color:#fff;font-weight:bold;;-webkit-text-stroke:0.1px #fff">45</span>
<span class="t" style="left:43.099999999999994px;width:100px;text-align:center;top:394.5px;font-size:3px;line-height:3.6px;color:#fff;font-weight:bold;;-webkit-text-stroke:0.1px #fff">46</span>
<span class="t" style="left:43.099999999999994px;width:100px;text-align:center;top:400.4px;font-size:3px;line-height:3.6px;color:#fff;font-weight:bold;;-webkit-text-stroke:0.1px #fff">47</span>
<span class="t" style="left:43.099999999999994px;width:100px;text-align:center;top:406.3px;font-size:3px;line-height:3.6px;color:#fff;font-weight:bold;;-webkit-text-stroke:0.1px #fff">48</span>
<span class="t" style="left:43.099999999999994px;width:100px;text-align:center;top:412.2px;font-size:3px;line-height:3.6px;color:#fff;font-weight:bold;;-webkit-text-stroke:0.1px #fff">49</span>
<span class="t" style="left:43.099999999999994px;width:100px;text-align:center;top:418.1px;font-size:3px;line-height:3.6px;color:#fff;font-weight:bold;;-webkit-text-stroke:0.1px #fff">50</span>
<span class="t" style="left:43.099999999999994px;width:100px;text-align:center;top:424.0px;font-size:3px;line-height:3.6px;color:#fff;font-weight:bold;;-webkit-text-stroke:0.1px #fff">51</span>
<span class="t" style="left:43.099999999999994px;width:100px;text-align:center;top:429.9px;font-size:3px;line-height:3.6px;color:#fff;font-weight:bold;;-webkit-text-stroke:0.1px #fff">52</span>
<span class="t" style="left:43.099999999999994px;width:100px;text-align:center;top:435.8px;font-size:3px;line-height:3.6px;color:#fff;font-weight:bold;;-webkit-text-stroke:0.1px #fff">53</span>
<span class="t" style="left:43.099999999999994px;width:100px;text-align:center;top:441.7px;font-size:3px;line-height:3.6px;color:#fff;font-weight:bold;;-webkit-text-stroke:0.1px #fff">54</span>
<span class="t" style="left:43.099999999999994px;width:100px;text-align:center;top:447.6px;font-size:3px;line-height:3.6px;color:#fff;font-weight:bold;;-webkit-text-stroke:0.1px #fff">55</span>
<span class="t " style="left:97.6px;top:59.59px;font-size:10.34px;line-height:12.41px;color:#000;font-weight:bold;">P.01: Number of persons in custody for terrorism-connected offences, by ideology</span>
<span class="t " style="left:501.9px;top:58.16px;font-size:6.9px;line-height:8.28px;color:#000;font-weight:bold;">1,2,3,4,5</span>
<span class="t " style="left:97.1px;top:76.35px;font-size:4.42px;line-height:5.3px;color:#111;font-weight:normal;;-webkit-text-stroke:0.12px #111">This worksheet contains one table. Some cells refer to notes which can be found below the data table. Some shorthand is used in the data table, including the symbol '*' to denote any statistics recorded that are not applicable and the symbol '-' for nil statistics recorded.</span>
<span class="t " style="left:97.1px;top:84.55px;font-size:4.42px;line-height:5.3px;color:#111;font-weight:normal;;-webkit-text-stroke:0.12px #111">Source: His Majesty's Prison and Probation Service (HMPPS) and Scottish Prisons Service (SPS).</span>
<span class="t " style="left:97.1px;top:95.15px;font-size:4.42px;line-height:5.3px;color:#3f66ad;font-weight:normal;text-decoration:underline;text-decoration-thickness:0.4px">Contents</span>
<span class="t " style="left:97.1px;top:100.75px;font-size:4.42px;line-height:5.3px;color:#3f66ad;font-weight:normal;text-decoration:underline;text-decoration-thickness:0.4px">User guide</span>
<div class="r" style="left:96.2px;top:112.8px;width:732.4px;height:0.7px;background:#8a8a8a;"></div>
<div class="r" style="left:96.2px;top:118.2px;width:732.4px;height:0.6px;background:#9a9a9a;"></div>
<span class="t" style="left:384.2px;width:100px;text-align:center;top:114.04px;font-size:4.26px;line-height:5.11px;color:#000;font-weight:bold;">Date of count</span>
<span class="t" style="right:172.0px;top:114.15px;font-size:4.42px;line-height:5.3px;color:#000;font-weight:bold;">Great Britain</span>
<div class="r" style="left:96.2px;top:134.9px;width:813.8px;height:25.8px;background:#ffff00;"></div>
<div class="r" style="left:96.2px;top:134.5px;width:732.4px;height:0.6px;background:#b0b040;"></div>
<div class="r" style="left:96.2px;top:175.6px;width:813.8px;height:10.3px;background:#fdb515;"></div>
<div class="r" style="left:96.2px;top:185.7px;width:732.4px;height:0.8px;background:#5a4a1a;"></div>
<span class="t" style="left:77.7px;width:100px;text-align:center;top:124.92px;font-size:4.3px;line-height:5.16px;color:#000;font-weight:bold;">Category of prisoner</span>
<span class="t" style="right:800.4px;top:125.05px;font-size:4.42px;line-height:5.3px;color:#111;font-weight:normal;-webkit-text-stroke:0.1px #111">31 March 2010</span>
<span class="t" style="right:760px;top:125.05px;font-size:4.42px;line-height:5.3px;color:#111;font-weight:normal;-webkit-text-stroke:0.1px #111">31 March 2011</span>
<span class="t" style="right:657.6px;top:125.05px;font-size:4.42px;line-height:5.3px;color:#111;font-weight:normal;-webkit-text-stroke:0.1px #111">31 March 2012</span>
<span class="t" style="right:617px;top:125.05px;font-size:4.42px;line-height:5.3px;color:#111;font-weight:normal;-webkit-text-stroke:0.1px #111">31 March 2013</span>
<span class="t" style="right:576.6px;top:125.05px;font-size:4.42px;line-height:5.3px;color:#111;font-weight:normal;-webkit-text-stroke:0.1px #111">31 March 2014</span>
<span class="t" style="right:536.2px;top:125.05px;font-size:4.42px;line-height:5.3px;color:#111;font-weight:normal;-webkit-text-stroke:0.1px #111">31 March 2015</span>
<span class="t" style="right:495.8px;top:125.05px;font-size:4.42px;line-height:5.3px;color:#111;font-weight:normal;-webkit-text-stroke:0.1px #111">31 March 2016</span>
<span class="t" style="right:455.4px;top:125.05px;font-size:4.42px;line-height:5.3px;color:#111;font-weight:normal;-webkit-text-stroke:0.1px #111">31 March 2017</span>
<span class="t" style="right:415px;top:125.05px;font-size:4.42px;line-height:5.3px;color:#111;font-weight:normal;-webkit-text-stroke:0.1px #111">31 March 2018</span>
<span class="t" style="right:374.6px;top:125.05px;font-size:4.42px;line-height:5.3px;color:#111;font-weight:normal;-webkit-text-stroke:0.1px #111">31 March 2019</span>
<span class="t" style="right:334.4px;top:125.05px;font-size:4.42px;line-height:5.3px;color:#111;font-weight:normal;-webkit-text-stroke:0.1px #111">31 March 2020</span>
<span class="t" style="right:293.8px;top:125.05px;font-size:4.42px;line-height:5.3px;color:#111;font-weight:normal;-webkit-text-stroke:0.1px #111">31 March 2021</span>
<span class="t" style="right:253.4px;top:125.05px;font-size:4.42px;line-height:5.3px;color:#111;font-weight:normal;-webkit-text-stroke:0.1px #111">31 March 2022</span>
<span class="t" style="right:213px;top:125.05px;font-size:4.42px;line-height:5.3px;color:#111;font-weight:normal;-webkit-text-stroke:0.1px #111">31 March 2023</span>
<span class="t" style="right:172.6px;top:125.05px;font-size:4.42px;line-height:5.3px;color:#111;font-weight:normal;-webkit-text-stroke:0.1px #111">31 March 2024</span>
<span class="t" style="right:800.4px;top:138.0px;font-size:5px;line-height:6.0px;color:#222;font-weight:bold;">*</span>
<span class="t" style="right:760px;top:138.0px;font-size:5px;line-height:6.0px;color:#222;font-weight:bold;">*</span>
<span class="t" style="right:617px;top:139.02px;font-size:4.3px;line-height:5.16px;color:#55551c;font-weight:normal;-webkit-text-stroke:0.08px #55551c">80</span>
<span class="t" style="right:576.6px;top:139.02px;font-size:4.3px;line-height:5.16px;color:#55551c;font-weight:normal;-webkit-text-stroke:0.08px #55551c">79</span>
<span class="t" style="right:536.2px;top:139.02px;font-size:4.3px;line-height:5.16px;color:#55551c;font-weight:normal;-webkit-text-stroke:0.08px #55551c">85</span>
<span class="t" style="right:495.8px;top:139.02px;font-size:4.3px;line-height:5.16px;color:#55551c;font-weight:normal;-webkit-text-stroke:0.08px #55551c">139</span>
<span class="t" style="right:455.4px;top:139.02px;font-size:4.3px;line-height:5.16px;color:#55551c;font-weight:normal;-webkit-text-stroke:0.08px #55551c">164</span>
<span class="t" style="right:415px;top:139.02px;font-size:4.3px;line-height:5.16px;color:#55551c;font-weight:normal;-webkit-text-stroke:0.08px #55551c">186</span>
<span class="t" style="right:374.6px;top:139.02px;font-size:4.3px;line-height:5.16px;color:#55551c;font-weight:normal;-webkit-text-stroke:0.08px #55551c">179</span>
<span class="t" style="right:334.4px;top:139.02px;font-size:4.3px;line-height:5.16px;color:#55551c;font-weight:normal;-webkit-text-stroke:0.08px #55551c">183</span>
<span class="t" style="right:293.8px;top:139.02px;font-size:4.3px;line-height:5.16px;color:#55551c;font-weight:normal;-webkit-text-stroke:0.08px #55551c">157</span>
<span class="t" style="right:253.4px;top:139.02px;font-size:4.3px;line-height:5.16px;color:#55551c;font-weight:normal;-webkit-text-stroke:0.08px #55551c">159</span>
<span class="t" style="right:213px;top:139.02px;font-size:4.3px;line-height:5.16px;color:#55551c;font-weight:normal;-webkit-text-stroke:0.08px #55551c">150</span>
<span class="t" style="right:172.6px;top:139.02px;font-size:4.3px;line-height:5.16px;color:#55551c;font-weight:normal;-webkit-text-stroke:0.08px #55551c">154</span>
<span class="t" style="right:800.4px;top:151.0px;font-size:5px;line-height:6.0px;color:#222;font-weight:bold;">*</span>
<span class="t" style="right:760px;top:151.0px;font-size:5px;line-height:6.0px;color:#222;font-weight:bold;">*</span>
<span class="t" style="right:617px;top:152.02px;font-size:4.3px;line-height:5.16px;color:#55551c;font-weight:normal;-webkit-text-stroke:0.08px #55551c">4</span>
<span class="t" style="right:576.6px;top:152.02px;font-size:4.3px;line-height:5.16px;color:#55551c;font-weight:normal;-webkit-text-stroke:0.08px #55551c">4</span>
<span class="t" style="right:536.2px;top:152.02px;font-size:4.3px;line-height:5.16px;color:#55551c;font-weight:normal;-webkit-text-stroke:0.08px #55551c">3</span>
<span class="t" style="right:495.8px;top:152.02px;font-size:4.3px;line-height:5.16px;color:#55551c;font-weight:normal;-webkit-text-stroke:0.08px #55551c">4</span>
<span class="t" style="right:455.4px;top:152.02px;font-size:4.3px;line-height:5.16px;color:#55551c;font-weight:normal;-webkit-text-stroke:0.08px #55551c">9</span>
<span class="t" style="right:415px;top:152.02px;font-size:4.3px;line-height:5.16px;color:#55551c;font-weight:normal;-webkit-text-stroke:0.08px #55551c">28</span>
<span class="t" style="right:374.6px;top:152.02px;font-size:4.3px;line-height:5.16px;color:#55551c;font-weight:normal;-webkit-text-stroke:0.08px #55551c">33</span>
<span class="t" style="right:334.4px;top:152.02px;font-size:4.3px;line-height:5.16px;color:#55551c;font-weight:normal;-webkit-text-stroke:0.08px #55551c">44</span>
<span class="t" style="right:293.8px;top:152.02px;font-size:4.3px;line-height:5.16px;color:#55551c;font-weight:normal;-webkit-text-stroke:0.08px #55551c">44</span>
<span class="t" style="right:253.4px;top:152.02px;font-size:4.3px;line-height:5.16px;color:#55551c;font-weight:normal;-webkit-text-stroke:0.08px #55551c">57</span>
<span class="t" style="right:213px;top:152.02px;font-size:4.3px;line-height:5.16px;color:#55551c;font-weight:normal;-webkit-text-stroke:0.08px #55551c">65</span>
<span class="t" style="right:172.6px;top:152.02px;font-size:4.3px;line-height:5.16px;color:#55551c;font-weight:normal;-webkit-text-stroke:0.08px #55551c">69</span>
<span class="t" style="right:800.4px;top:164.6px;font-size:5px;line-height:6.0px;color:#222;font-weight:bold;">*</span>
<span class="t" style="right:760px;top:164.6px;font-size:5px;line-height:6.0px;color:#222;font-weight:bold;">*</span>
<span class="t" style="right:617px;top:165.62px;font-size:4.3px;line-height:5.16px;color:#444;font-weight:normal;-webkit-text-stroke:0.08px #444">3</span>
<span class="t" style="right:576.6px;top:165.62px;font-size:4.3px;line-height:5.16px;color:#444;font-weight:normal;-webkit-text-stroke:0.08px #444">7</span>
<span class="t" style="right:536.2px;top:165.62px;font-size:4.3px;line-height:5.16px;color:#444;font-weight:normal;-webkit-text-stroke:0.08px #444">4</span>
<span class="t" style="right:495.8px;top:165.62px;font-size:4.3px;line-height:5.16px;color:#444;font-weight:normal;-webkit-text-stroke:0.08px #444">3</span>
<span class="t" style="right:455.4px;top:165.62px;font-size:4.3px;line-height:5.16px;color:#444;font-weight:normal;-webkit-text-stroke:0.08px #444">7</span>
<span class="t" style="right:415px;top:165.62px;font-size:4.3px;line-height:5.16px;color:#444;font-weight:normal;-webkit-text-stroke:0.08px #444">13</span>
<span class="t" style="right:374.6px;top:165.62px;font-size:4.3px;line-height:5.16px;color:#444;font-weight:normal;-webkit-text-stroke:0.08px #444">12</span>
<span class="t" style="right:334.4px;top:165.62px;font-size:4.3px;line-height:5.16px;color:#444;font-weight:normal;-webkit-text-stroke:0.08px #444">11</span>
<span class="t" style="right:293.8px;top:165.62px;font-size:4.3px;line-height:5.16px;color:#444;font-weight:normal;-webkit-text-stroke:0.08px #444">14</span>
<span class="t" style="right:253.4px;top:165.62px;font-size:4.3px;line-height:5.16px;color:#444;font-weight:normal;-webkit-text-stroke:0.08px #444">16</span>
<span class="t" style="right:213px;top:165.62px;font-size:4.3px;line-height:5.16px;color:#444;font-weight:normal;-webkit-text-stroke:0.08px #444">17</span>
<span class="t" style="right:172.6px;top:165.62px;font-size:4.3px;line-height:5.16px;color:#444;font-weight:normal;-webkit-text-stroke:0.08px #444">23</span>
<span class="t" style="right:800.4px;top:178.82px;font-size:4.3px;line-height:5.16px;color:#503600;font-weight:bold;-webkit-text-stroke:0.08px #503600">128</span>
<span class="t" style="right:760px;top:178.82px;font-size:4.3px;line-height:5.16px;color:#503600;font-weight:bold;-webkit-text-stroke:0.08px #503600">119</span>
<span class="t" style="right:657.6px;top:178.82px;font-size:4.3px;line-height:5.16px;color:#503600;font-weight:bold;-webkit-text-stroke:0.08px #503600">118</span>
<span class="t" style="right:617px;top:178.82px;font-size:4.3px;line-height:5.16px;color:#503600;font-weight:bold;-webkit-text-stroke:0.08px #503600">87</span>
<span class="t" style="right:576.6px;top:178.82px;font-size:4.3px;line-height:5.16px;color:#503600;font-weight:bold;-webkit-text-stroke:0.08px #503600">90</span>
<span class="t" style="right:536.2px;top:178.82px;font-size:4.3px;line-height:5.16px;color:#503600;font-weight:bold;-webkit-text-stroke:0.08px #503600">94</span>
<span class="t" style="right:495.8px;top:178.82px;font-size:4.3px;line-height:5.16px;color:#503600;font-weight:bold;-webkit-text-stroke:0.08px #503600">146</span>
<span class="t" style="right:455.4px;top:178.82px;font-size:4.3px;line-height:5.16px;color:#503600;font-weight:bold;-webkit-text-stroke:0.08px #503600">180</span>
<span class="t" style="right:415px;top:178.82px;font-size:4.3px;line-height:5.16px;color:#503600;font-weight:bold;-webkit-text-stroke:0.08px #503600">229</span>
<span class="t" style="right:374.6px;top:178.82px;font-size:4.3px;line-height:5.16px;color:#503600;font-weight:bold;-webkit-text-stroke:0.08px #503600">224</span>
<span class="t" style="right:334.4px;top:178.82px;font-size:4.3px;line-height:5.16px;color:#503600;font-weight:bold;-webkit-text-stroke:0.08px #503600">238</span>
<span class="t" style="right:293.8px;top:178.82px;font-size:4.3px;line-height:5.16px;color:#503600;font-weight:bold;-webkit-text-stroke:0.08px #503600">215</span>
<span class="t" style="right:253.4px;top:178.82px;font-size:4.3px;line-height:5.16px;color:#503600;font-weight:bold;-webkit-text-stroke:0.08px #503600">232</span>
<span class="t" style="right:213px;top:178.82px;font-size:4.3px;line-height:5.16px;color:#503600;font-weight:bold;-webkit-text-stroke:0.08px #503600">232</span>
<span class="t" style="right:172.6px;top:178.82px;font-size:4.3px;line-height:5.16px;color:#503600;font-weight:bold;-webkit-text-stroke:0.08px #503600">246</span>
<span class="t " style="left:97.1px;top:178.82px;font-size:4.3px;line-height:5.16px;color:#3a2a00;font-weight:bold;">Total</span>
<span class="t " style="left:245.8px;top:136.88px;font-size:10.2px;line-height:12.24px;color:#000;font-weight:normal;-webkit-text-stroke:0.22px #000">Islamist Extremist</span>
<span class="t " style="left:245.8px;top:149.88px;font-size:10.2px;line-height:12.24px;color:#000;font-weight:normal;-webkit-text-stroke:0.22px #000">Extreme Right-Wing</span>
<span class="t " style="left:245.8px;top:164.28px;font-size:10.2px;line-height:12.24px;color:#000;font-weight:normal;-webkit-text-stroke:0.22px #000">Other</span>
<span class="t " style="left:271.2px;top:162.56px;font-size:6.4px;line-height:7.68px;color:#000;font-weight:normal;-webkit-text-stroke:0.22px #000">6</span>
<svg style="left:0;top:0" width="1000" height="462"><g stroke="#222" stroke-width="0.75" stroke-dasharray="1.7 1.1"><path d="M342.4 118.6 V134.2 M342.4 175.6 V188 M666.4 118.6 V188"/></g></svg>
<span class="t " style="left:97.1px;top:193.64px;font-size:4.44px;line-height:5.33px;color:#000;font-weight:bold;;-webkit-text-stroke:0.12px #000">Data Notes:</span>
<span class="t " style="left:97.1px;top:199.64px;font-size:4.44px;line-height:5.33px;color:#111;font-weight:normal;;-webkit-text-stroke:0.12px #111">1. See the user guide for a description of the prisoner categories used in this bulletin.</span>
<span class="t " style="left:97.1px;top:205.64px;font-size:4.44px;line-height:5.33px;color:#111;font-weight:normal;;-webkit-text-stroke:0.12px #111">2. Includes persons on remand as well as those sentenced to prison custody for a criminal offence.</span>
<span class="t " style="left:97.1px;top:211.64px;font-size:4.44px;line-height:5.33px;color:#111;font-weight:normal;;-webkit-text-stroke:0.12px #111">3.The number of prisoners broken down by ideology is only available from the year ending March 2013, following a re-defining of terrorist prisoner categories. Further information can be found in the user guide.</span>
<div class="r" style="left:96.2px;top:216.6px;width:813.8px;height:6.2px;background:linear-gradient(to right,#e8eee9 0,#e4ebe5 60px,#ccd4cd 68px,#d0d7d1 100%);box-sizing:border-box;border-top:0.55px solid #3f5f48;border-bottom:0.55px solid #86ab90"></div>
<div class="r" style="left:97.1px;top:216.6px;width:812.9px;height:6.2px;overflow:hidden"><span class="t" style="left:0;top:0.7px;font-size:4.44px;line-height:5.3px;color:#1a1a1a">4. Following changes agreed with the prison service, for figures at 30 September 2020 onwards, we have adopted the definition 'Terrorism-connected offender' to replace the previously used definition 'Terrorism-related offender' for this time series. A 'terrorism-connection' is a determination made by the sentencing court in accordance with Part 3 of the Counter-Terrorism Act 2008 and only after consideration of the evidence</span></div>
<span class="t " style="left:97.1px;top:223.14px;font-size:4.44px;line-height:5.33px;color:#111;font-weight:normal;;-webkit-text-stroke:0.12px #111">5. Owing to a review by SPS, figures for the number of persons in custody for terrorism-connected offences from specific previous quarters have been amended. These revisions date back to March 2022 and are reflected in these data tables.</span>
<span class="t " style="left:97.1px;top:228.53px;font-size:4.44px;line-height:5.33px;color:#111;font-weight:normal;;-webkit-text-stroke:0.12px #111">6. Includes any prisoners holding ideologies including Dissident Irish Extremist, Domestic Extremist, Left Wing Extremist, no specific ideology, and not known.</span>
<svg style="left:174.6px;top:223.4px" width="4.6" height="4.6" viewBox="0 0 4.6 4.6"><circle cx="2.3" cy="2.3" r="1.8" fill="#fff" stroke="#222" stroke-width="0.7"/><path d="M2.3 1.2 V3.4 M1.2 2.3 H3.4" stroke="#555" stroke-width="0.35"/></svg>
<div class="r" style="left:309px;top:244.6px;width:462.4px;height:188.4px;box-sizing:border-box;border:0.8px solid #f0f0f0;background:#fff"></div>
<span class="t" style="left:490.5px;width:100px;text-align:center;top:247.36px;font-size:4.4px;line-height:5.28px;color:#777;font-weight:normal;">Comparison</span>
<div class="r" style="left:360px;top:368.25px;width:407px;height:0.7px;background:#eeeeee;"></div>
<div class="r" style="left:360px;top:336.04999999999995px;width:407px;height:0.7px;background:#eeeeee;"></div>
<div class="r" style="left:360px;top:303.84999999999997px;width:407px;height:0.7px;background:#eeeeee;"></div>
<div class="r" style="left:360px;top:271.65px;width:407px;height:0.7px;background:#eeeeee;"></div>
<div class="r" style="left:360px;top:400.45px;width:407px;height:0.7px;background:#e4e4e4;"></div>
<span class="t" style="right:661.1px;top:360.16px;font-size:14.4px;line-height:17.28px;color:#575757;font-weight:normal;transform:scaleX(0.985);transform-origin:right center">50</span>
<span class="t" style="right:661.1px;top:327.96px;font-size:14.4px;line-height:17.28px;color:#575757;font-weight:normal;transform:scaleX(0.985);transform-origin:right center">100</span>
<span class="t" style="right:661.1px;top:295.76px;font-size:14.4px;line-height:17.28px;color:#575757;font-weight:normal;transform:scaleX(0.985);transform-origin:right center">150</span>
<span class="t" style="right:661.1px;top:263.56px;font-size:14.4px;line-height:17.28px;color:#575757;font-weight:normal;transform:scaleX(0.985);transform-origin:right center">200</span>
<span class="t" style="right:661.4px;top:392.4px;font-size:14px;line-height:16.8px;color:#595959;font-weight:normal;">-</span>
<svg style="left:0;top:0" width="1000" height="462"><polyline points="374.3,349.28 408.48,349.92 442.66,346.06 476.85,311.28 511.03,295.18 545.21,281.02 579.39,285.52 613.57,282.95 647.75,299.69 681.94,298.4 716.12,304.2 750.3,301.62" fill="none" stroke="#548aa0" stroke-width="1.2" stroke-linejoin="round" stroke-linecap="round"/><polyline points="374.3,398.22 408.48,398.22 442.66,398.87 476.85,398.22 511.03,395.0 545.21,382.77 579.39,379.55 613.57,372.46 647.75,372.46 681.94,364.09 716.12,358.94 750.3,356.36" fill="none" stroke="#e9a183" stroke-width="1.2" stroke-linejoin="round" stroke-linecap="round"/><polyline points="374.3,398.87 408.48,396.29 442.66,398.22 476.85,398.87 511.03,396.29 545.21,392.43 579.39,393.07 613.57,393.72 647.75,391.78 681.94,390.5 716.12,389.85 750.3,385.99" fill="none" stroke="#4f8f63" stroke-width="1.2" stroke-linejoin="round" stroke-linecap="round"/><text x="374.3" y="406.4" font-size="2.6" text-anchor="middle" fill="#8a8a8a" font-family="Liberation Sans">1</text><text x="408.48" y="406.4" font-size="2.6" text-anchor="middle" fill="#8a8a8a" font-family="Liberation Sans">2</text><text x="442.66" y="406.4" font-size="2.6" text-anchor="middle" fill="#8a8a8a" font-family="Liberation Sans">3</text><text x="476.85" y="406.4" font-size="2.6" text-anchor="middle" fill="#8a8a8a" font-family="Liberation Sans">4</text><text x="511.03" y="406.4" font-size="2.6" text-anchor="middle" fill="#8a8a8a" font-family="Liberation Sans">5</text><text x="545.21" y="406.4" font-size="2.6" text-anchor="middle" fill="#8a8a8a" font-family="Liberation Sans">6</text><text x="579.39" y="406.4" font-size="2.6" text-anchor="middle" fill="#8a8a8a" font-family="Liberation Sans">7</text><text x="613.57" y="406.4" font-size="2.6" text-anchor="middle" fill="#8a8a8a" font-family="Liberation Sans">8</text><text x="647.75" y="406.4" font-size="2.6" text-anchor="middle" fill="#8a8a8a" font-family="Liberation Sans">9</text><text x="681.94" y="406.4" font-size="2.6" text-anchor="middle" fill="#8a8a8a" font-family="Liberation Sans">10</text><text x="716.12" y="406.4" font-size="2.6" text-anchor="middle" fill="#8a8a8a" font-family="Liberation Sans">11</text><text x="750.3" y="406.4" font-size="2.6" text-anchor="middle" fill="#8a8a8a" font-family="Liberation Sans">12</text></svg>
<div class="r" style="left:394.6px;top:411.5px;width:7.2px;height:1.1px;background:#4a859b;"></div>
<span class="t " style="left:402.4px;top:403.86px;font-size:12.9px;line-height:15.48px;color:#595959;font-weight:normal;transform:scaleX(0.915);transform-origin:left center">Islamist Extremist</span>
<div class="r" style="left:523.4px;top:411.5px;width:7.2px;height:1.1px;background:#e9a183;"></div>
<span class="t " style="left:531.2px;top:403.86px;font-size:12.9px;line-height:15.48px;color:#595959;font-weight:normal;transform:scaleX(0.889);transform-origin:left center">Extreme Right-Wing</span>
<div class="r" style="left:394.6px;top:425.9px;width:7.2px;height:1.1px;background:#4f8f63;"></div>
<span class="t " style="left:402.4px;top:418.26px;font-size:12.9px;line-height:15.48px;color:#595959;font-weight:normal;transform:scaleX(0.915);transform-origin:left center">Other6</span>
<svg style="left:94.2px;top:291px" width="156.4" height="156.4" viewBox="0 0 156.4 156.4">
<defs><clipPath id="cc"><circle cx="78.2" cy="78.2" r="78.2"/></clipPath>
<filter id="b1" x="-20%" y="-20%" width="140%" height="140%"><feGaussianBlur stdDeviation="0.9"/></filter>
<filter id="b2" x="-20%" y="-20%" width="140%" height="140%"><feGaussianBlur stdDeviation="2.2"/></filter>
<filter id="b3" x="-30%" y="-30%" width="160%" height="160%"><feGaussianBlur stdDeviation="4"/></filter>
<linearGradient id="wall" x1="0" y1="0" x2="1" y2="0"><stop offset="0" stop-color="#c9bcab"/><stop offset="0.4" stop-color="#ddd5ca"/><stop offset="0.75" stop-color="#e3dfd8"/><stop offset="1" stop-color="#ece9e4"/></linearGradient>
<linearGradient id="skin" x1="0.2" y1="0" x2="0.8" y2="1"><stop offset="0" stop-color="#f0d2c2"/><stop offset="0.42" stop-color="#e1b099"/><stop offset="1" stop-color="#c88b73"/></linearGradient>
<linearGradient id="swt" x1="0.3" y1="0" x2="0.6" y2="1"><stop offset="0" stop-color="#f0efee"/><stop offset="0.45" stop-color="#f3f3f2"/><stop offset="1" stop-color="#e7e6e5"/></linearGradient>
</defs>
<g clip-path="url(#cc)">
<rect width="156.4" height="156.4" fill="url(#wall)"/>
<g filter="url(#b1)">
<!-- ceiling / upper wall -->
<path d="M0 0 H156 V14 L60 26 L0 30 Z" fill="#e6dfd5"/>
<path d="M58 18 H104 V44 H58 Z" fill="#d9d1c6"/>
<!-- bookshelf -->
<rect x="-4" y="20" width="64" height="92" fill="#241e1b"/>
<rect x="6" y="27" width="19" height="12" fill="#d9d2c8"/><rect x="31" y="27" width="19" height="12" fill="#cfc6ba"/>
<rect x="3" y="42" width="21" height="14" fill="#9a7f70"/><rect x="6" y="43" width="4" height="13" fill="#e6ddd2"/><rect x="12" y="44" width="3" height="12" fill="#b04a48"/><rect x="17" y="43" width="4" height="13" fill="#e8e0d6"/>
<rect x="30" y="43" width="20" height="14" fill="#7c6a78"/><rect x="33" y="44" width="3.4" height="13" fill="#d6bfd0"/><rect x="38" y="45" width="3" height="12" fill="#b85a7a"/><rect x="43" y="44" width="3.4" height="13" fill="#c9b8a8"/>
<rect x="2" y="61" width="22" height="20" fill="#8e7466"/><rect x="5" y="62" width="4" height="19" fill="#e2d4c8"/><rect x="11" y="63" width="3.4" height="18" fill="#c97a86"/><rect x="16" y="62" width="4" height="19" fill="#d9cfc2"/>
<rect x="30" y="61" width="20" height="20" fill="#4a3c36"/><rect x="33" y="63" width="4" height="18" fill="#8a7868"/><rect x="40" y="64" width="3" height="17" fill="#6a5a50"/>
<rect x="1" y="87" width="22" height="20" fill="#6f7260"/><rect x="4" y="88" width="4" height="19" fill="#d8d4c8"/><rect x="10" y="89" width="4" height="18" fill="#9aa088"/><rect x="16" y="88" width="3.4" height="19" fill="#c8c0b0"/>
<rect x="30" y="87" width="20" height="20" fill="#3e332e"/>
<rect x="-4" y="20" width="64" height="92" fill="#241e1b" opacity="0.28"/>
<!-- painting -->
<rect x="109.4" y="34.4" width="31.4" height="42.4" fill="#f8f7f5"/>
<rect x="113" y="40.4" width="19.6" height="27" fill="#8a7a32"/>
<rect x="113" y="40.4" width="8" height="12" fill="#5d6a34"/><rect x="119" y="46" width="9" height="10" fill="#d0a028"/><rect x="121" y="53" width="9" height="9" fill="#c23a2a"/><rect x="114" y="57" width="8" height="9" fill="#d97a2a"/><rect x="126" y="42" width="6" height="9" fill="#6f7a3a"/><rect x="127" y="60" width="5.6" height="7" fill="#4a5a2e"/>
<rect x="143.6" y="48" width="13" height="27" fill="#cfcbc6"/><rect x="147.4" y="55.6" width="7" height="6.6" fill="#7e3a34"/>
<!-- sofa / cushions -->
<path d="M122 96 C132 88 150 88 158 92 V118 H124 Z" fill="#d9c2b2"/>
<path d="M126 104 H158 V140 H128 Z" fill="#d8cbbb"/>
<path d="M130 110 L150 106 L156 124 L136 130 Z" fill="#c9b7a2"/>
<!-- chair -->
<path d="M42 70 C44 64 58 64 60 70 V92 H42 Z" fill="#1d2026"/>
</g>
<!-- neck -->
<g filter="url(#b1)">
<path d="M55 68 L57 84 C60 97 70 107 80 107 C92 107 101 101 106 92 L107 82 Z" fill="#ddab93"/>
<path d="M57.6 79 C59 88 62 95 67 100" stroke="#8a5644" stroke-width="0.9" fill="none" opacity="0.8"/>
</g>
<!-- sweater -->
<g filter="url(#b1)">
<path d="M-8 160 C-6 128 8 112 30 98 C42 90 52 84 58 80 C60 92 68 104 80 104.5 C90 104.8 98 100 104 93 C118 98 132 114 140 134 C144 146 146 156 146 164 Z" fill="url(#swt)"/>
<path d="M56.4 82 C58.4 95 67 108 80 108.4 C92 108.8 101 103.4 106.6 95.4" stroke="#e3e1df" stroke-width="2.2" fill="none"/>
<path d="M20 120 C30 130 34 146 32 160" stroke="#e6e4e2" stroke-width="3" fill="none"/>
<path d="M114 114 C121 126 123 140 121 158" stroke="#e6e4e2" stroke-width="3" fill="none"/>
</g>
<!-- neck + head -->
<g filter="url(#b1)">
<path d="M82.6 21.6 C74 21.4 68 24.6 65.3 28.5 C60 34 57.4 39 57 43.6 C55.6 49 55.6 54 56.2 58.8 C56.6 64 57.6 69 59.2 74 C61 77 64 79 67.5 80.4 C73 83 78 87 83 90 C88 93 94 95.6 98 96.2 C101 96.6 103 96.2 104.2 95.4 C106.6 94.6 108.2 93.4 108.6 92.3 C109 89.6 107.6 87 107.5 84.8 C108.6 83.6 109.2 82.6 109 81.5 C108.6 79.6 109 77.6 109.6 76 C111.6 75.6 113.8 74.2 113.5 72.2 C112.4 68 110 63 109.6 58.8 C109.6 56.4 110.4 54.4 110.3 52.3 C110.6 48 110.2 43.6 109 39.3 C107.6 34.4 105.4 30.4 102.5 27.4 C97.6 23.4 90.6 21.6 82.6 21.6 Z" fill="url(#skin)"/>
</g>
<g filter="url(#b2)">
<ellipse cx="79" cy="33" rx="16" ry="9" fill="#f7e3d8" opacity="0.92"/>
<path d="M64 79 C72 84 80 90 86 93 C92 96 99 97.6 104 96.4 L101 101 C92 102 82 98 74 92 C69 88 65 84 62 80 Z" fill="#a86c54" opacity="0.55"/>
<ellipse cx="95" cy="66" rx="8" ry="10" fill="#e6b8a2" opacity="0.55"/>
<ellipse cx="72" cy="56" rx="8" ry="14" fill="#d9a48c" opacity="0.5"/>
</g>
<g filter="url(#b1)">
<ellipse cx="62" cy="66.4" rx="3.6" ry="6.6" fill="#d68c78"/>
<ellipse cx="62.6" cy="67" rx="1.6" ry="3.8" fill="#a85a4a"/>
<path d="M99 57 C101.6 55.6 105.2 55.8 107.6 57.2" stroke="#4a342e" stroke-width="1.5" fill="none"/>
<path d="M97.6 52.6 C100.6 50.6 106 50.8 109.4 52.4" stroke="#9a6c5a" stroke-width="1.4" fill="none"/>
<path d="M101 84.2 C103.4 85 105.8 84.8 107.8 84" stroke="#864640" stroke-width="1.5" fill="none"/>
<path d="M106.6 73.4 C108.4 74.6 110.6 74.6 112 73.6" stroke="#a86c5a" stroke-width="1.1" fill="none"/>
<path d="M100 62 C101 68 100 74 98 78" stroke="#cf9a84" stroke-width="1.6" fill="none" opacity="0.7"/>
</g>
</g></svg>
<span class="t " style="left:99.0px;top:424.94px;font-size:16.6px;line-height:19.92px;color:rgba(255,255,255,0.97);font-weight:200;font-family:'DejaVu Sans Light','DejaVu Sans',sans-serif;letter-spacing:1px;transform:scaleX(1.113);transform-origin:left center;text-shadow:0 0 1.4px rgba(120,120,120,0.35)">blackbeltbarrister</span>
<svg style="left:240px;top:424px" width="4" height="4" viewBox="0 0 4 4"><path d="M0.4 0.2 L3.4 1.9 L0.4 3.6 Z" fill="#d02828"/></svg>
</div></body></html>
